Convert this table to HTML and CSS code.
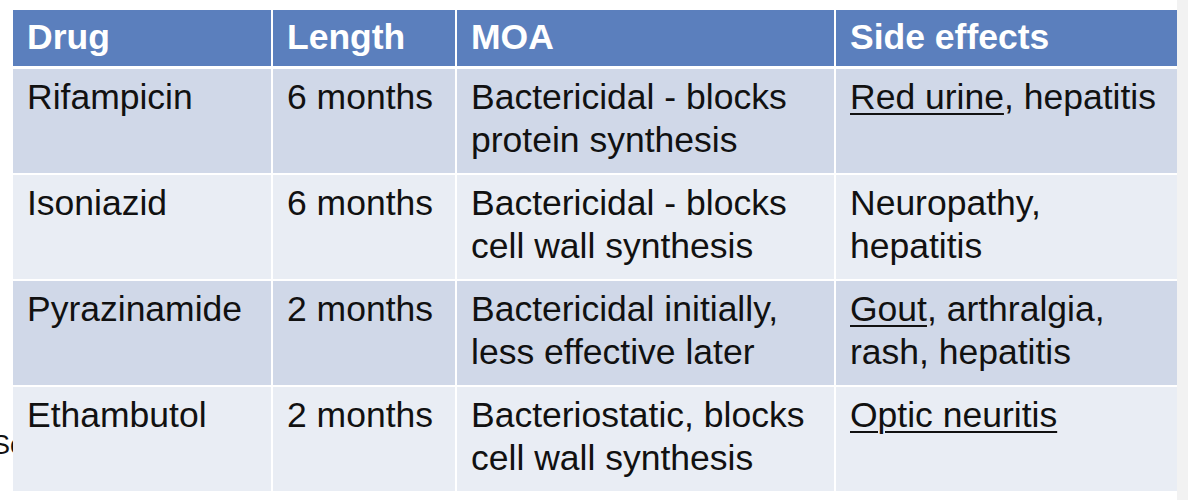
FILE: index.html
```html
<!DOCTYPE html>
<html>
<head>
<meta charset="utf-8">
<link rel="stylesheet" href="styles.css">
</head>
<body>
<div class="page">
  <div class="slide">
    <span class="behind">Sc</span>
    <div class="table">
      <div class="th">Drug</div>
      <div class="th">Length</div>
      <div class="th">MOA</div>
      <div class="th">Side effects</div>

      <div class="td odd">Rifampicin</div>
      <div class="td odd">6 months</div>
      <div class="td odd">Bactericidal - blocks protein synthesis</div>
      <div class="td odd"><span class="ul">Red urine</span>, hepatitis</div>

      <div class="td even">Isoniazid</div>
      <div class="td even">6 months</div>
      <div class="td even">Bactericidal - blocks cell wall synthesis</div>
      <div class="td even">Neuropathy, hepatitis</div>

      <div class="td odd">Pyrazinamide</div>
      <div class="td odd">2 months</div>
      <div class="td odd">Bactericidal initially, less effective later</div>
      <div class="td odd"><span class="ul">Gout</span>, arthralgia, rash, hepatitis</div>

      <div class="td even">Ethambutol</div>
      <div class="td even">2 months</div>
      <div class="td even">Bacteriostatic, blocks cell wall synthesis</div>
      <div class="td even"><span class="ul">Optic neuritis</span></div>
    </div>
  </div>
  <div class="strip"></div>
</div>
</body>
</html>
```

FILE: styles.css
```css
html, body {
  margin: 0;
  padding: 0;
  background: #ffffff;
}
.page {
  display: flex;
  width: 1188px;
  height: 500px;
  overflow: hidden;
}
.slide {
  position: relative;
  width: 1177px;
  height: 500px;
  background: #ffffff;
  padding: 10px 0 0 13px;
  box-sizing: border-box;
}
.strip {
  width: 11px;
  height: 500px;
  background: #f2f2f2;
}
.behind {
  position: absolute;
  left: -8px;
  top: 430px;
  font-family: "Liberation Sans", Arial, sans-serif;
  font-size: 27px;
  line-height: 31px;
  color: #111;
}
.table {
  position: relative;
  display: grid;
  grid-template-columns: 258px 182px 377px 341px;
  grid-template-rows: 57px 104px 104px 104px 104px;
  gap: 2px;
  background: #ffffff;
  width: 1164px;
  font-family: "Liberation Sans", Arial, sans-serif;
  font-size: 35.5px;
  line-height: 43px;
}
.th {
  background: #5b7fbd;
  color: #ffffff;
  font-weight: bold;
  padding: 6px 0 0 14px;
  margin-bottom: 1px;
}
.td {
  color: #111111;
  padding: 7px 10px 0 14px;
}
.odd { background: #d0d8e8; }
.even { background: #e9edf4; }
.ul {
  text-decoration: underline;
  text-decoration-thickness: 2px;
  text-underline-offset: 4px;
}
```
